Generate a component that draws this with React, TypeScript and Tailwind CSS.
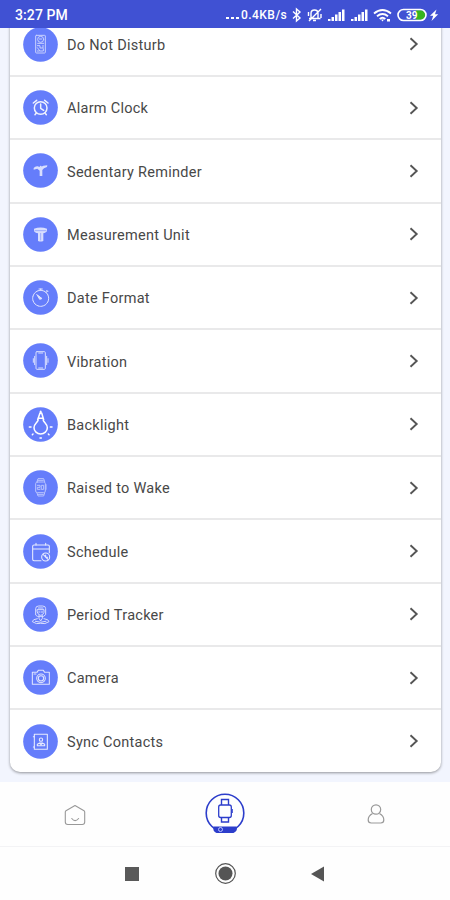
import type { ReactNode } from "react";

const rows: { label: string; icon: ReactNode }[] = [
  {
    label: "Do Not Disturb",
    icon: (
      <g opacity="0.65" strokeWidth="3">
        <rect x="38" y="25" width="29" height="53" rx="2" />
        <circle cx="53" cy="37" r="9" />
        <path d="M44 49h18M43 56h8v7h9v-8M43 62l8 10h10v-7M43 72h6M49 36h7" />
      </g>
    ),
  },
  {
    label: "Alarm Clock",
    icon: (
      <g strokeWidth="4.5" opacity="0.9">
        <circle cx="53" cy="54" r="19" />
        <path d="M53 42v13l9 6M31 39l10-8M75 39l-10-8M40 69l-4 5M66 69l4 5" />
      </g>
    ),
  },
  {
    label: "Sedentary Reminder",
    icon: (
      <g stroke="none" fill="#fff" opacity="0.75">
        <path d="M32 45q5-6 12-5l8 3 9-5 12-1-1 5-9 4-5 5v18h-8V53l-7-6-11 3z" />
        <circle cx="53" cy="41" r="3" />
      </g>
    ),
  },
  {
    label: "Measurement Unit",
    icon: (
      <g opacity="0.75">
        <path d="M33 35q20-7 39 0v8q-6 6-11 6v23q-8 3-16 0V49q-7 0-12-6z" fill="#fff" stroke="none" />
        <path d="M36 41h33M53 49v20" stroke="#657dfb" strokeWidth="1.5" />
      </g>
    ),
  },
  {
    label: "Date Format",
    icon: (
      <g strokeWidth="3" opacity="0.8">
        <circle cx="53" cy="55" r="24" strokeDasharray="10 1.5" />
        <path d="M53 31v-4M48 27h10M69 38l4-5M71 31l4 4M41 44l10 8" />
        <path d="M43 46l7 12 6-2z" fill="#fff" />
      </g>
    ),
  },
  {
    label: "Vibration",
    icon: (
      <g strokeWidth="3" opacity="0.75">
        <rect x="39" y="26" width="28" height="53" rx="3" />
        <path d="M47 30h12M47 75h12M35 40v25M71 40v25M31 47v11M75 47v11" />
      </g>
    ),
  },
  {
    label: "Backlight",
    icon: (
      <g strokeWidth="4.5">
        <path d="M45 34v7c-4 7-12 11-12 21a20 19 0 0 0 40 0c0-10-8-14-12-21v-7zM44 38l7-20h5l6 20" />
        <path d="M53 13v6" strokeWidth="5" />
        <path d="M19 60h5M82 60h5M28 83l2-2M76 81l2 2M51 93h4" />
      </g>
    ),
  },
  {
    label: "Raised to Wake",
    icon: (
      <g strokeWidth="3" opacity="0.55">
        <rect x="38" y="36" width="29" height="32" rx="5" />
        <path d="M42 35l3-9h17l3 9M42 69l3 9h17l3-9M69 44v14M43 46h8v6h-8v6h8M56 46h6v12h-6zM45 31h16M45 73h16" />
      </g>
    ),
  },
  {
    label: "Schedule",
    icon: (
      <g strokeWidth="3.2" opacity="0.85">
        <path d="M54 80H33q-4 0-4-4V37q0-4 4-4h42q4 0 4 4v19M29 45h50M39 28v6M68 28v6" />
        <circle cx="68" cy="69" r="12" />
        <path d="M61 62l14 14M68 63v7h6" />
      </g>
    ),
  },
  {
    label: "Period Tracker",
    icon: (
      <g strokeWidth="3" opacity="0.75">
        <path d="M38 53V35q0-8 9-8h12q9 0 9 8v18l-6 5H44z" />
        <path d="M43 38h20v8q-3 9-10 9t-10-9zM46 33h14M47 45h4M55 45h4M48 56v8l5 8 5-8v-8" />
        <path d="M43 65q-15 2-15 9 12 9 25 5 13 4 25-5 0-7-15-9M37 73q16 6 32 0" />
      </g>
    ),
  },
  {
    label: "Camera",
    icon: (
      <g strokeWidth="3.2" opacity="0.8">
        <path d="M28 37h14l4-6h15l4 6h14v36H28zM33 42h6" />
        <circle cx="54" cy="55" r="13" />
        <circle cx="54" cy="55" r="8" />
      </g>
    ),
  },
  {
    label: "Sync Contacts",
    icon: (
      <g strokeWidth="3.2" opacity="0.85">
        <rect x="34" y="31" width="39" height="45" />
        <circle cx="54" cy="47" r="5" />
        <path d="M43 65v-4l7-4h8l7 4v4zM49 57l5 5 5-5M34 38h-3M34 69h-3" />
      </g>
    ),
  },
];

function StatusBar() {
  return (
    <header className="relative z-10 flex h-7 shrink-0 items-center bg-[#4051d3] pt-[2px] text-white">
      <span className="ml-[15px] text-[14px] leading-none font-medium tracking-[0.1px]">3:27 PM</span>
      <span className="ml-auto flex items-center gap-[2px]">
        <i className="mt-[5px] h-[2px] w-[3px] bg-white" />
        <i className="mt-[5px] h-[2px] w-[3px] bg-white" />
        <i className="mt-[5px] h-[2px] w-[3px] bg-white" />
      </span>
      <span className="ml-[2px] w-[49px] text-[12px] leading-none font-medium tracking-[0.45px] whitespace-nowrap">
        0.4KB/s
      </span>
      <svg className="h-4 w-[160px]" viewBox="0 0 160 16" fill="none" stroke="#fff" strokeWidth="1.4">
        <path d="M3 4.500l7 6.500-3.500 3V2L10 5l-7 6.500" />
        <g strokeWidth="1.4">
          <path d="M19 11.500h11.500M21 11V6.500q0-3.500 3.500-3.500t3.500 3.500V11M31 2L19 14M23 13.500h3M18.500 5v4M31 7v4" />
        </g>
        <g fill="#fff" stroke="none">
          <path d="M38 12h2.500v2H38zM41.500 10h2.500v4h-2.500zM45 7.500h2.500V14H45zM48.500 5H51v9h-2.500zM52 2.500h2.500V14H52z" />
          <path d="M61 12h2.500v2H61zM64.500 10H67v4h-2.500zM68 7.500h2.500V14H68zM71.500 5H74v9h-2.500zM75 2.500h2.500V14H75z" />
        </g>
        <path d="M84 6.500q8.500-7 17 0M87 9.300q5.500-4.500 11 0M89.700 12q2.800-2.500 5.600 0" strokeWidth="1.900" />
        <path d="M92.500 14.500l-1.500-2h3zM97 12h3v2.500h-3z" fill="#fff" stroke="none" />
        <path d="M126 3.200h5.500a5 5 0 0 1 0 9.600H126z" fill="#37b51e" stroke="none" />
        <rect x="108" y="2.500" width="28" height="11" rx="5.500" strokeWidth="1.600" />
        <text x="116" y="11.700" fontSize="10" fontWeight="700" fill="#fff" stroke="none" fontFamily="Roboto, sans-serif">39</text>
        <path d="M146.500 2.500l-6.500 6.200h3.200L141.500 14l6.700-6.700H145z" fill="#fff" stroke="none" />
      </svg>
    </header>
  );
}

export default function App() {
  return (
    <div className="flex h-[900px] w-[450px] flex-col overflow-hidden bg-white font-['Roboto',sans-serif]">
      <StatusBar />
      <main className="h-[754px] shrink-0 overflow-hidden bg-[#f2f5fe] pr-[9px] pl-[10px]">
        <div className="-mt-[14.5px] overflow-hidden rounded-[10px] bg-white shadow-[0_1px_3px_rgba(0,0,0,0.4)]">
          {rows.map((row) => (
            <div
              key={row.label}
              className="flex h-[63.36px] items-center border-b-2 border-[#e9e9ea] pr-[22px] pl-[13px] last:h-[61.5px] last:border-b-0"
            >
              <svg
                className="size-[35px]"
                viewBox="0 0 105 105"
                fill="none"
                stroke="#fff"
                strokeLinecap="round"
                strokeLinejoin="round"
              >
                <circle cx="52.500" cy="52.500" r="52" fill="#657dfb" stroke="none" />
                {row.icon}
              </svg>
              <span className="ml-[9px] pt-[3px] text-[14.5px] tracking-[0.27px] text-[#484848]">{row.label}</span>
              <svg className="ml-auto h-[14px] w-[10px]" viewBox="0 0 10 14" fill="none" stroke="#555" strokeWidth="1.9">
                <path d="M1.500 1.300L7.700 7l-6.200 5.700" />
              </svg>
            </div>
          ))}
        </div>
      </main>
      <nav className="grid h-[65px] shrink-0 grid-cols-3 items-center justify-items-center border-b border-[#f3f3f5] bg-[#fefefe]">
        <svg className="mt-[2px] h-[22px] w-[22px]" viewBox="0 0 22 22" fill="none" stroke="#999" strokeWidth="1.1" strokeLinejoin="round">
          <path d="M11 1.500L20 6.700q.7.400.7 1.200V18q0 2.500-2.500 2.500H3.800Q1.300 20.500 1.300 18V7.900q0-.8.700-1.200z" />
          <path d="M7.800 14.500q3.200 4.200 6.800 0" strokeLinecap="round" />
        </svg>
        <svg className="-mt-[1px] h-[42px] w-[42px]" viewBox="0 0 42 42" fill="none" stroke="#2c3dcb">
          <circle cx="21" cy="20" r="18.800" strokeWidth="1.600" />
          <path d="M9.500 33.500h23q1.500 4.500-3 6.500h-17q-4-1.500-3-6.500z" fill="#2c3dcb" stroke="none" />
          <circle cx="16.500" cy="36.500" r="2" stroke="#b9c2ff" strokeWidth="1" />
          <rect x="14.700" y="12" width="12.600" height="12.500" rx="2" strokeWidth="1.300" />
          <path d="M17.500 12V6.500h7V12M17.500 24.500V29h7v-4.500" strokeWidth="1.400" />
          <path d="M28.300 16v4" strokeWidth="1" />
        </svg>
        <svg className="ml-[2px] h-[20px] w-[18px]" viewBox="0 0 18 20" fill="none" stroke="#999" strokeWidth="1.200">
          <circle cx="9" cy="5.500" r="4.700" />
          <path d="M5.600 9.500Q1.200 11.700 1.200 16q0 3 3 3h9.600q3 0 3-3 0-4.300-4.400-6.500" />
        </svg>
      </nav>
      <footer className="flex h-[53px] shrink-0 items-center bg-[#fefefe] pl-[125px]">
        <div className="size-[14px] bg-[#595959]" />
        <svg className="ml-[75px] size-[23px]" viewBox="0 0 23 23" fill="none" stroke="#555">
          <circle cx="11.500" cy="11.500" r="9.800" strokeWidth="1.200" />
          <circle cx="11.500" cy="11.500" r="7" fill="#555" stroke="none" />
        </svg>
        <svg className="ml-[74px] h-[16px] w-[14px]" viewBox="0 0 14 16">
          <path d="M0 8L13 .500v15z" fill="#555" />
        </svg>
      </footer>
    </div>
  );
}
